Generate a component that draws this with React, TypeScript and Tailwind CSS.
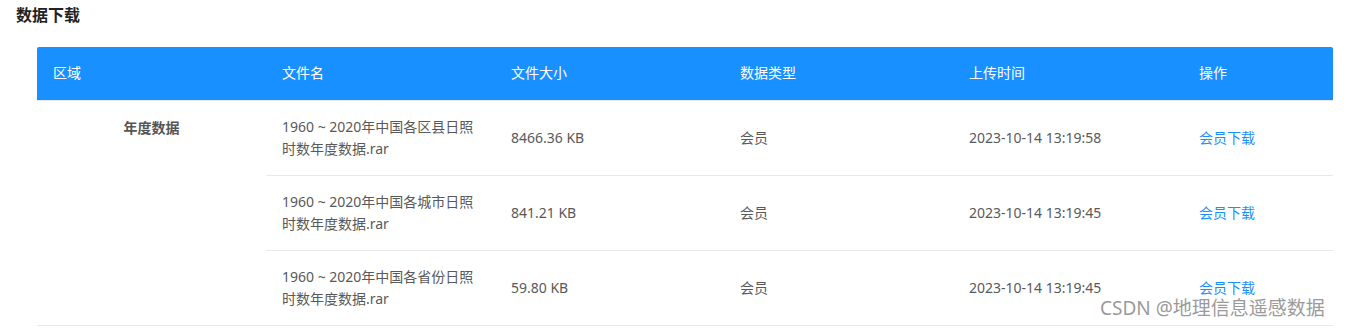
const font = {
  fontFamily: '"Noto Sans", "Noto Sans CJK SC", sans-serif',
};

const rows = [
  {
    name: "1960 ~ 2020年中国各区县日照时数年度数据.rar",
    size: "8466.36 KB",
    type: "会员",
    time: "2023-10-14 13:19:58",
  },
  {
    name: "1960 ~ 2020年中国各城市日照时数年度数据.rar",
    size: "841.21 KB",
    type: "会员",
    time: "2023-10-14 13:19:45",
  },
  {
    name: "1960 ~ 2020年中国各省份日照时数年度数据.rar",
    size: "59.80 KB",
    type: "会员",
    time: "2023-10-14 13:19:45",
  },
];

const heads = ["区域", "文件名", "文件大小", "数据类型", "上传时间", "操作"];

export default function App() {
  return (
    <div
      className="relative w-[1347px] h-[328px] bg-white overflow-hidden"
      style={font}
    >
      <h2 className="pl-4 pt-[4px] h-[47px] text-[16px] leading-[22px] font-bold text-[#222]">
        数据下载
      </h2>
      <div className="pl-[37px]">
        <table className="w-[1296px] table-fixed border-collapse text-[14px] leading-[22px]">
          <colgroup>
            <col className="w-[229px]" />
            <col className="w-[229px]" />
            <col className="w-[229px]" />
            <col className="w-[229px]" />
            <col className="w-[230px]" />
            <col className="w-[150px]" />
          </colgroup>
          <thead>
            <tr className="h-[53px] bg-[#1890ff] border-b border-[#e8e8e8]">
              {heads.map((h, i) => (
                <th
                  key={h}
                  className={`text-left font-normal text-white pl-4 ${
                    i === 0 ? "rounded-tl-[2px]" : ""
                  } ${i === heads.length - 1 ? "rounded-tr-[2px]" : ""}`}
                >
                  {h}
                </th>
              ))}
            </tr>
          </thead>
          <tbody className="text-[#595959]">
            {rows.map((r, i) => (
              <tr key={r.name} className="h-[75px] border-b border-[#e8e8e8]">
                {i === 0 && (
                  <td
                    rowSpan={3}
                    className="align-top text-center pt-4 font-bold text-[#555]"
                  >
                    年度数据
                  </td>
                )}
                <td className="pl-4 pr-2">{r.name}</td>
                <td className="pl-4">{r.size}</td>
                <td className="pl-4">{r.type}</td>
                <td className="pl-4">{r.time}</td>
                <td className="pl-4 text-[#1890ff]">会员下载</td>
              </tr>
            ))}
          </tbody>
        </table>
      </div>
      <div className="absolute left-[1100px] top-[296px] text-[19px] leading-[24px] text-[#9a9a9a] [text-shadow:0_0_2px_#fff]">
        CSDN @地理信息遥感数据
      </div>
    </div>
  );
}
